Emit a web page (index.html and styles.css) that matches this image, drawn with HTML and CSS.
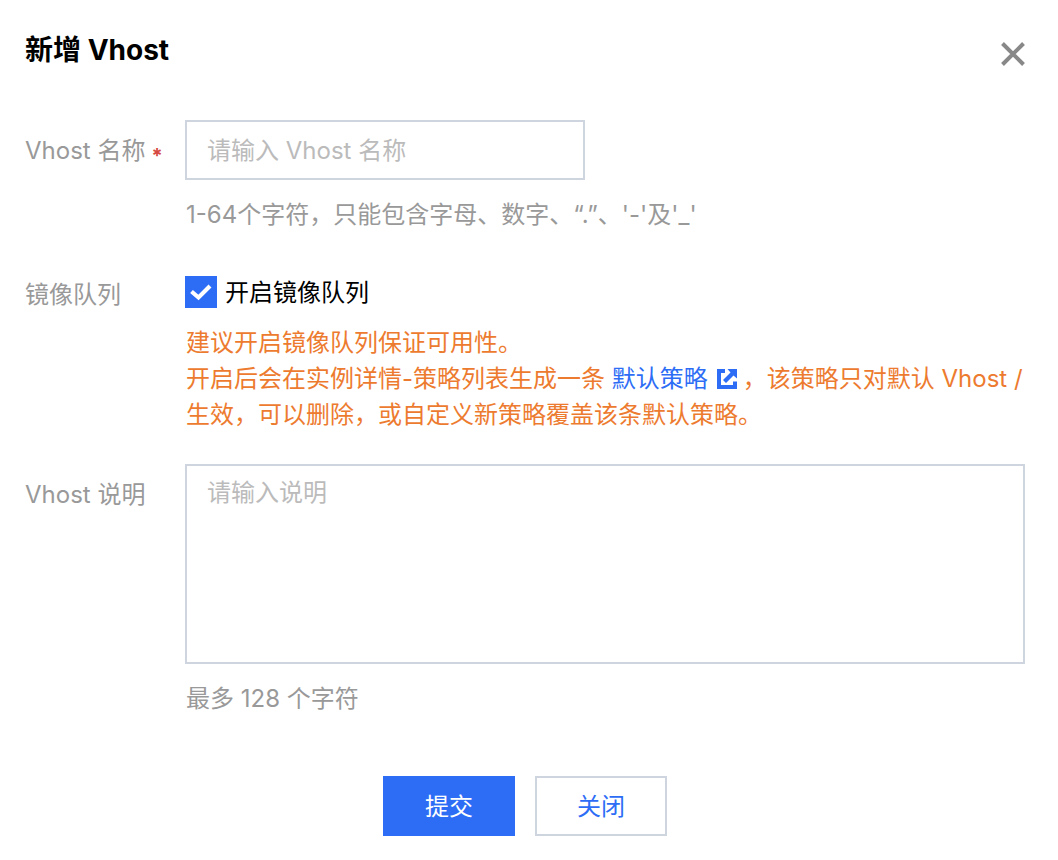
FILE: index.html
```html
<!DOCTYPE html>
<html lang="zh-CN">
<head>
<meta charset="utf-8">
<meta name="viewport" content="width=device-width, initial-scale=1">
<title>新增 Vhost</title>
<link rel="stylesheet" href="styles.css">
</head>
<body>
<main class="dialog" role="dialog" aria-labelledby="dialog-title">
  <header class="dialog-header">
    <h1 class="dialog-title" id="dialog-title">新增 Vhost</h1>
    <button class="close-button" type="button" aria-label="关闭窗口">
      <svg viewBox="0 0 24 24" width="24" height="24" aria-hidden="true"><path d="M1.5 1.5 22.5 22.5M22.5 1.5 1.5 22.5" fill="none" stroke="currentColor" stroke-width="4"/></svg>
    </button>
  </header>
  <form class="form">
    <div class="form-row">
      <label class="form-label" for="name">Vhost 名称<span class="required">*</span></label>
      <div class="form-control">
        <input class="text-input" id="name" type="text" placeholder="请输入 Vhost 名称" required>
        <p class="hint">1-64个字符，只能包含字母、数字、“.”、'-'及'_'</p>
      </div>
    </div>
    <div class="form-row form-row-mirror">
      <span class="form-label">镜像队列</span>
      <div class="form-control">
        <label class="check-label"><input class="checkbox" type="checkbox" checked>
          <svg class="check-mark" viewBox="0 0 32 32" width="32" height="32" aria-hidden="true"><path d="M6.500 15.500 13.500 21.500 25 10" fill="none" stroke="currentColor" stroke-width="4.200"/></svg>
          <span class="check-text">开启镜像队列</span></label>
        <p class="warning">建议开启镜像队列保证可用性。<br>开启后会在实例详情-策略列表生成一条 <a class="link" href="#policy">默认策略<svg class="link-icon" viewBox="0 0 20 20" width="20" height="20" aria-hidden="true"><path d="M0 0H8V4H4V16H16V12.500H20V20H0Z" fill="currentColor"/><path d="M10.500 0H20V9.500L16.500 6.500 9 14 6 11 13.500 3.500Z" fill="currentColor"/></svg></a>，该策略只对默认 Vhost / 生效，可以删除，或自定义新策略覆盖该条默认策略。</p>
      </div>
    </div>
    <div class="form-row">
      <label class="form-label" for="description">Vhost 说明</label>
      <div class="form-control">
        <textarea class="text-area" id="description" placeholder="请输入说明"></textarea>
        <p class="hint">最多 128 个字符</p>
      </div>
    </div>
    <footer class="actions">
      <button class="button button-primary" type="submit">提交</button>
      <button class="button" type="button">关闭</button>
    </footer>
  </form>
</main>
</body>
</html>
```
FILE: styles.css
```css
* {
  box-sizing: border-box;
}

body {
  margin: 0;
  background: #fff;
  color: #000;
  font: 24px/36px Inter, "Noto Sans CJK SC", sans-serif;
}

h1,
p {
  margin: 0;
}

input,
textarea,
button {
  font: inherit;
}

.dialog {
  padding: 32px 33px 24px 25px;
}

.dialog-header {
  display: flex;
  justify-content: space-between;
  align-items: flex-start;
  margin-bottom: 46px;
}

.dialog-title {
  font-size: 28px;
  line-height: 36px;
  font-weight: 700;
}

.close-button {
  display: flex;
  padding: 10px 0 8px;
  border: 0;
  background: none;
  color: #888;
  cursor: pointer;
}

.form {
  display: flex;
  flex-direction: column;
  gap: 31px;
}

.form-row {
  display: grid;
  grid-template-columns: 160px minmax(0, 1fr);
}

.form-row-mirror {
  padding-top: 12px;
}

.form-label {
  padding-top: 13px;
  color: #999;
}

.form-row-mirror .form-label {
  padding-top: 1px;
}

.required {
  margin-left: 6px;
  color: #d54941;
  font-size: 20px;
  font-weight: 700;
  line-height: 20px;
  vertical-align: -4px;
}

.text-input,
.text-area {
  display: block;
  border: 2px solid #cfd5de;
  border-radius: 0;
  background: #fff;
  color: #000;
  outline: 0;
}

.text-input {
  width: 400px;
  max-width: 100%;
  height: 60px;
  padding: 0 20px;
}

.text-area {
  width: 100%;
  height: 200px;
  padding: 9px 20px;
  resize: none;
}

.text-input::placeholder,
.text-area::placeholder {
  color: #bbb;
  opacity: 1;
}

.hint {
  padding: 17px 0 0 1px;
  color: #999;
}

.check-label {
  display: grid;
  grid-template-columns: 32px auto;
  justify-content: start;
  align-items: center;
  column-gap: 8px;
  line-height: 30px;
}

.check-text {
  padding-top: 2px;
}

.checkbox {
  grid-area: 1 / 1;
  width: 32px;
  height: 32px;
  margin: 0;
  appearance: none;
  border: 2px solid #cfd5de;
}

.checkbox:checked {
  border-color: #2d6df6;
  background: #2d6df6;
}

.check-mark {
  grid-area: 1 / 1;
  color: #fff;
  pointer-events: none;
}

.warning {
  padding: 17px 0 0 1px;
  color: #ed7b2f;
}

.link {
  color: #2d6df6;
  text-decoration: none;
}

.link-icon {
  margin: 0 6px 0 9px;
  vertical-align: -2px;
}

.actions {
  display: flex;
  justify-content: center;
  gap: 20px;
  padding-top: 28px;
}

.button {
  width: 132px;
  height: 60px;
  padding: 2px 0 0;
  border: 2px solid #cfd5de;
  background: #fff;
  color: #2d6df6;
  cursor: pointer;
}

.button-primary {
  border-color: #2d6df6;
  background: #2d6df6;
  color: #fff;
}
```
